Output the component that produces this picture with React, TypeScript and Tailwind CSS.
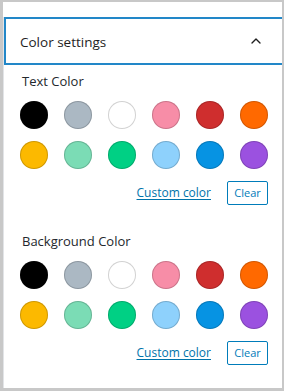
import { ChevronUp } from "lucide-react";

const swatches = [
  "#000000",
  "#abb8c3",
  "#ffffff",
  "#f78da7",
  "#cf2e2e",
  "#ff6900",
  "#fcb900",
  "#7bdcb5",
  "#00d084",
  "#8ed1fc",
  "#0693e3",
  "#9b51e0",
];

function ColorGroup({ label, className }: { label: string; className: string }) {
  return (
    <div className={className}>
      <div className="ml-[2px] h-[18px] text-[13px] leading-[18px] text-[#23282d]">{label}</div>
      <div className="mt-[11px] grid grid-cols-[repeat(6,28px)] gap-x-4 gap-y-3">
        {swatches.map((c) => (
          <span
            key={c}
            className="block h-[28px] w-[28px] rounded-full shadow-[inset_0_0_0_1px_rgba(0,0,0,0.18)]"
            style={{ backgroundColor: c }}
          />
        ))}
      </div>
      <div className="mt-3 flex w-[248px] items-center justify-end gap-4">
        <span className="text-[12px] leading-[18px] text-[#0073aa] underline underline-offset-2">Custom color</span>
        <button className="h-[24px] w-[41px] rounded-[2px] border border-[#007cba] bg-white text-[11px] text-[#007cba]">
          Clear
        </button>
      </div>
    </div>
  );
}

export default function App() {
  return (
    <div
      className="h-[391px] w-[284px] overflow-hidden border-b-[3px] border-l-[3px] border-r-2 border-t-2 border-[#c8c8c8] bg-white"
      style={{ fontFamily: '"Open Sans", "Noto Sans", sans-serif' }}
    >
      <div className="h-full border-b border-l border-[#e2e4e7]">
        <div className="mt-[15px] flex h-[48px] items-center justify-between border-y-2 border-l-2 border-[#2287c8] pl-[14px] pr-[18px]">
          <span className="mt-[2px] text-[13.5px] text-[#1e1e1e]">Color settings</span>
          <ChevronUp size={16} strokeWidth={2} className="text-[#1e1e1e]" />
        </div>
        <ColorGroup label="Text Color" className="mt-[7px] pl-4" />
        <ColorGroup label="Background Color" className="mt-[27px] pl-4" />
      </div>
    </div>
  );
}
